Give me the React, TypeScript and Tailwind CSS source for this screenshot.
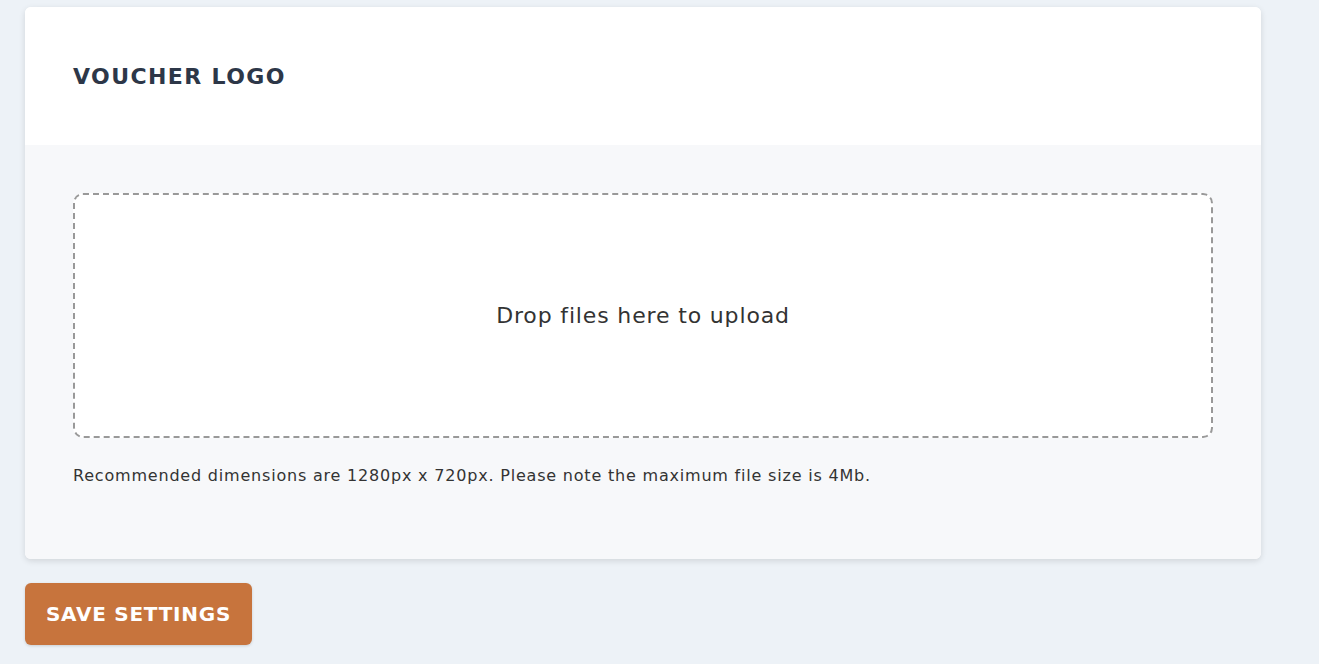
export default function App() {
  return (
    <div
      className="min-h-[664px] bg-[#edf2f7] pt-[7px] pl-[25px]"
      style={{ fontFamily: '"DejaVu Sans", "Noto Sans", sans-serif' }}
    >
      <div className="w-[1236px] rounded-md bg-white shadow-[0_2px_6px_rgba(0,0,0,0.12)] overflow-hidden">
        <div className="h-[138px] flex items-center px-12 bg-white">
          <h2 className="text-[22px] font-bold tracking-[1.4px] text-[#2d3748]">VOUCHER LOGO</h2>
        </div>
        <div className="bg-[#f7f8fa] px-12 pt-12 pb-[71px]">
          <div className="h-[245px] rounded-[10px] border-2 border-dashed border-[#999999] bg-white flex items-center justify-center">
            <span className="text-[22px] tracking-[0.85px] text-[#333333]">Drop files here to upload</span>
          </div>
          <p className="mt-[26px] text-[16px] leading-[24px] tracking-[0.8px] text-[#333333]">
            Recommended dimensions are 1280px x 720px. Please note the maximum file size is 4Mb.
          </p>
        </div>
      </div>
      <button className="mt-[24px] h-[62px] w-[227px] rounded-md bg-[#c7743d] text-white text-[20px] font-bold tracking-[0.75px] shadow-[0_1px_3px_rgba(0,0,0,0.15)]">
        SAVE SETTINGS
      </button>
    </div>
  );
}
